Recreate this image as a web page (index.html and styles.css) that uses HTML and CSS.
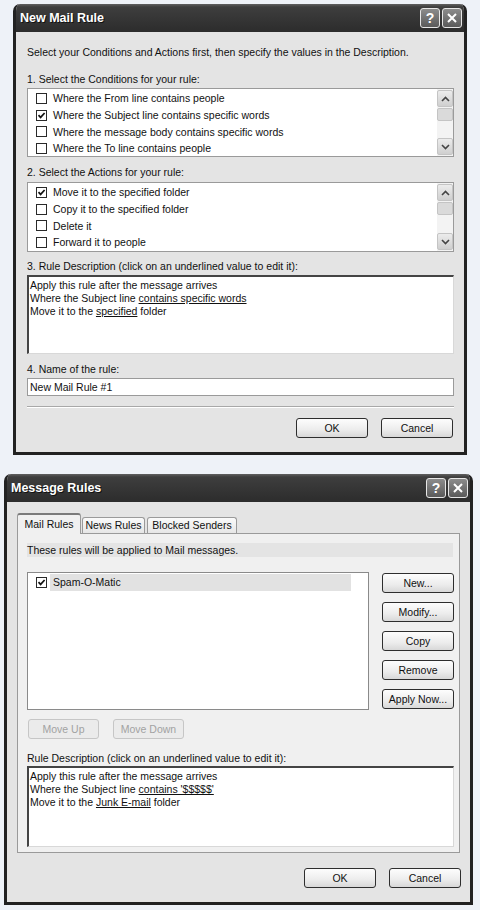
FILE: index.html
```html
<!DOCTYPE html>
<html lang="en">
<head>
    <meta charset="UTF-8">
    <meta name="viewport" content="width=device-width, initial-scale=1.0">
    <title>Mail Rules</title>
    <link rel="stylesheet" href="styles.css">
</head>
<body>
    <!-- New Mail Rule dialog -->
    <div class="window win-rule">
        <div class="titlebar">
            <span class="title">New Mail Rule</span>
            <div class="title-btns">
                <span class="tbtn">?</span>
                <span class="tbtn"><svg viewBox="0 0 12 12" width="12" height="12"><path d="M2 2 L10 10 M10 2 L2 10" stroke="#fff" stroke-width="2"/></svg></span>
            </div>
        </div>
        <div class="body">
            <div class="intro">Select your Conditions and Actions first, then specify the values in the Description.</div>

            <div class="label label-1">1. Select the Conditions for your rule:</div>
            <div class="listbox list-cond">
                <ul class="items">
                    <li><span class="cb"></span>Where the From line contains people</li>
                    <li><span class="cb checked"><svg viewBox="0 0 9 9" width="9" height="9"><path d="M1.5 4.2 L3.6 6.4 L7.6 2" fill="none" stroke="#111" stroke-width="1.7"/></svg></span>Where the Subject line contains specific words</li>
                    <li><span class="cb"></span>Where the message body contains specific words</li>
                    <li><span class="cb"></span>Where the To line contains people</li>
                </ul>
                <div class="scrollbar">
                    <span class="sb-btn"><svg viewBox="0 0 9 6" width="9" height="6"><path d="M1 5 L4.5 1.5 L8 5" fill="none" stroke="#444" stroke-width="1.6"/></svg></span>
                    <span class="sb-thumb"></span>
                    <span class="sb-track"></span>
                    <span class="sb-btn"><svg viewBox="0 0 9 6" width="9" height="6"><path d="M1 1 L4.5 4.5 L8 1" fill="none" stroke="#444" stroke-width="1.6"/></svg></span>
                </div>
            </div>

            <div class="label label-2">2. Select the Actions for your rule:</div>
            <div class="listbox list-act">
                <ul class="items">
                    <li><span class="cb checked"><svg viewBox="0 0 9 9" width="9" height="9"><path d="M1.5 4.2 L3.6 6.4 L7.6 2" fill="none" stroke="#111" stroke-width="1.7"/></svg></span>Move it to the specified folder</li>
                    <li><span class="cb"></span>Copy it to the specified folder</li>
                    <li><span class="cb"></span>Delete it</li>
                    <li><span class="cb"></span>Forward it to people</li>
                </ul>
                <div class="scrollbar">
                    <span class="sb-btn"><svg viewBox="0 0 9 6" width="9" height="6"><path d="M1 5 L4.5 1.5 L8 5" fill="none" stroke="#444" stroke-width="1.6"/></svg></span>
                    <span class="sb-thumb"></span>
                    <span class="sb-track"></span>
                    <span class="sb-btn"><svg viewBox="0 0 9 6" width="9" height="6"><path d="M1 1 L4.5 4.5 L8 1" fill="none" stroke="#444" stroke-width="1.6"/></svg></span>
                </div>
            </div>

            <div class="label label-3">3. Rule Description (click on an underlined value to edit it):</div>
            <div class="desc desc-rule">
                <div>Apply this rule after the message arrives</div>
                <div>Where the Subject line <u>contains specific words</u></div>
                <div>Move it to the <u>specified</u> folder</div>
            </div>

            <div class="label label-4">4. Name of the rule:</div>
            <div class="textbox">New Mail Rule #1</div>

            <div class="separator"></div>

            <div class="footer">
                <button class="btn">OK</button>
                <button class="btn">Cancel</button>
            </div>
        </div>
    </div>

    <!-- Message Rules dialog -->
    <div class="window win-rules">
        <div class="titlebar">
            <span class="title">Message Rules</span>
            <div class="title-btns">
                <span class="tbtn">?</span>
                <span class="tbtn"><svg viewBox="0 0 12 12" width="12" height="12"><path d="M2 2 L10 10 M10 2 L2 10" stroke="#fff" stroke-width="2"/></svg></span>
            </div>
        </div>
        <div class="body">
            <div class="tabs">
                <span class="tab active tab-mail">Mail Rules</span>
                <span class="tab tab-news">News Rules</span>
                <span class="tab tab-blocked">Blocked Senders</span>
            </div>
            <div class="panel">
                <div class="panel-note">These rules will be applied to Mail messages.</div>
                <div class="rules-row">
                    <div class="rules-list">
                        <div class="rule-item">
                            <span class="cb checked"><svg viewBox="0 0 9 9" width="9" height="9"><path d="M1.5 4.2 L3.6 6.4 L7.6 2" fill="none" stroke="#111" stroke-width="1.7"/></svg></span>
                            <span class="rule-name">Spam-O-Matic</span>
                        </div>
                    </div>
                    <div class="side-btns">
                        <button class="btn">New...</button>
                        <button class="btn">Modify...</button>
                        <button class="btn">Copy</button>
                        <button class="btn">Remove</button>
                        <button class="btn">Apply Now...</button>
                    </div>
                </div>
                <div class="move-btns">
                    <button class="btn disabled">Move Up</button>
                    <button class="btn disabled">Move Down</button>
                </div>
                <div class="label label-desc">Rule Description (click on an underlined value to edit it):</div>
                <div class="desc desc-rules">
                    <div>Apply this rule after the message arrives</div>
                    <div>Where the Subject line <u>contains '$$$$$'</u></div>
                    <div>Move it to the <u>Junk E-mail</u> folder</div>
                </div>
            </div>
            <div class="footer footer-rules">
                <button class="btn">OK</button>
                <button class="btn">Cancel</button>
            </div>
        </div>
    </div>
</body>
</html>
```

FILE: styles.css
```css
body {
    margin: 0;
    background-color: #eef2f8;
    font-family: "Liberation Sans", Arial, sans-serif;
    font-size: 10.5px;
    color: #111;
}

.window {
    background: #e4e4e4;
    border: 3px solid #222;
    border-top: none;
    border-radius: 7px 7px 0 0;
    overflow: hidden;
}

.win-rule {
    width: 448px;
    margin: 4px 0 0 13px;
}

.win-rules {
    width: 463px;
    margin: 19px 0 0 4px;
}

.titlebar {
    height: 28px;
    display: flex;
    align-items: center;
    justify-content: space-between;
    padding: 0 2px 0 4px;
    background: linear-gradient(#606060 0, #3e3e3e 3px, #363636 50%, #2c2c2c 100%);
}

.title {
    color: #fff;
    font-weight: bold;
    font-size: 12.5px;
    text-shadow: 1px 1px 0 #111;
}

.title-btns {
    display: flex;
    gap: 2px;
}

.tbtn {
    width: 18px;
    height: 18px;
    border: 1px solid #e6e6e6;
    border-radius: 3px;
    background: linear-gradient(#8c8c8c, #5a5a5a);
    color: #fff;
    font-weight: bold;
    font-size: 14px;
    display: flex;
    align-items: center;
    justify-content: center;
}

.win-rule .body {
    padding: 13px 10px 14px 11px;
}

.intro,
.label {
    line-height: 14px;
    height: 14px;
    white-space: nowrap;
}

.label-1 { margin-top: 13px; }
.label-2 { margin-top: 8px; }
.label-3 { margin-top: 7px; }
.label-4 { margin-top: 8px; }

.listbox {
    display: flex;
    background: #fff;
    border: 1px solid #9a9a9a;
    box-sizing: border-box;
    margin-top: 2px;
}

.list-cond { height: 69px; }
.list-act { height: 70px; margin-top: 3px; }

.items {
    flex: 1;
    list-style: none;
    margin: 0;
    padding: 1px 0 0 8px;
}

.items li {
    height: 16.7px;
    display: flex;
    align-items: center;
    white-space: nowrap;
}

.cb {
    width: 11px;
    height: 11px;
    box-sizing: border-box;
    border: 1px solid #2a2a2a;
    background: #fff;
    margin-right: 6px;
    display: flex;
    align-items: center;
    justify-content: center;
    flex-shrink: 0;
}

.scrollbar {
    width: 16px;
    display: flex;
    flex-direction: column;
    background: #f3f3f3;
}

.sb-btn {
    height: 15px;
    margin: 1px 0;
    border: 1px solid #c4c4c4;
    border-radius: 2px;
    background: linear-gradient(#ececec, #cfcfcf);
    display: flex;
    align-items: center;
    justify-content: center;
}

.sb-thumb {
    height: 11px;
    border: 1px solid #c4c4c4;
    border-radius: 2px;
    background: #dadada;
}

.sb-track {
    flex: 1;
}

.desc {
    background: #fff;
    box-sizing: border-box;
    border: 2px solid #444;
    border-right: 1px solid #d8d8d8;
    border-bottom: 1px solid #d8d8d8;
    padding: 2px 0 0 1px;
    line-height: 13px;
    white-space: nowrap;
}

.desc-rule {
    height: 79px;
    margin-top: 2px;
}

.textbox {
    height: 18px;
    box-sizing: border-box;
    margin-top: 2px;
    background: #fff;
    border: 1px solid #9a9a9a;
    padding-left: 2px;
    line-height: 16px;
}

.separator {
    margin-top: 10px;
    height: 1px;
    border-top: 1px solid #a8a8a8;
    background: #fff;
}

.footer {
    display: flex;
    justify-content: flex-end;
    gap: 13px;
    margin-top: 10px;
    padding-right: 1px;
}

.btn {
    width: 72px;
    height: 20px;
    box-sizing: border-box;
    border: 1px solid #2e2e2e;
    border-radius: 3px;
    background: linear-gradient(#fdfdfd, #ececec 60%, #d8d8d8);
    font-family: "Liberation Sans", Arial, sans-serif;
    font-size: 10.5px;
    color: #111;
    padding: 0;
}

.btn.disabled {
    width: 71px;
    border-color: #c6c6c6;
    background: #ebebeb;
    color: #a2a2a2;
}

/* Message Rules */

.win-rules .body {
    padding: 11px 10px 14px 10px;
}

.tabs {
    display: flex;
    align-items: flex-end;
    height: 20px;
}

.tab {
    height: 16px;
    box-sizing: border-box;
    border: 1px solid #9a9a9a;
    border-bottom: none;
    border-radius: 3px 3px 0 0;
    background: linear-gradient(#fafafa, #e6e6e6);
    line-height: 15px;
    text-align: center;
    margin-right: 1px;
    position: relative;
}

.tab-mail { width: 64px; }
.tab-news { width: 63px; }
.tab-blocked { width: 90px; margin-left: 1px; }

.tab.active {
    height: 21px;
    padding-top: 2px;
    background: #f0f0f0;
    border-top: 2px solid #7a7a7a;
    margin-bottom: -1px;
    z-index: 1;
}

.panel {
    background: #f0f0f0;
    border: 1px solid #9a9a9a;
    padding: 9px 5px 5px 9px;
}

.panel-note {
    height: 14px;
    line-height: 14px;
    background: #e4e4e4;
    margin-right: 1px;
}

.rules-row {
    display: flex;
    gap: 13px;
    margin-top: 15px;
}

.rules-list {
    width: 342px;
    height: 138px;
    box-sizing: border-box;
    background: #fff;
    border: 1px solid #8a8a8a;
    padding: 1px 0 0 8px;
}

.rule-item {
    display: flex;
    align-items: center;
    height: 17px;
}

.rule-item .cb {
    margin-right: 3px;
}

.rule-name {
    width: 298px;
    height: 17px;
    line-height: 17px;
    padding-left: 3px;
    background: #e2e2e2;
}

.side-btns {
    display: flex;
    flex-direction: column;
    gap: 9px;
    margin-top: 1px;
}

.move-btns {
    display: flex;
    gap: 14px;
    margin: 9px 0 0 1px;
}

.label-desc {
    margin-top: 12px;
}

.desc-rules {
    height: 81px;
    margin-top: 1px;
}

.footer-rules {
    margin-top: 15px;
    gap: 13px;
    padding-right: 0;
    margin-right: -1px;
}
```
